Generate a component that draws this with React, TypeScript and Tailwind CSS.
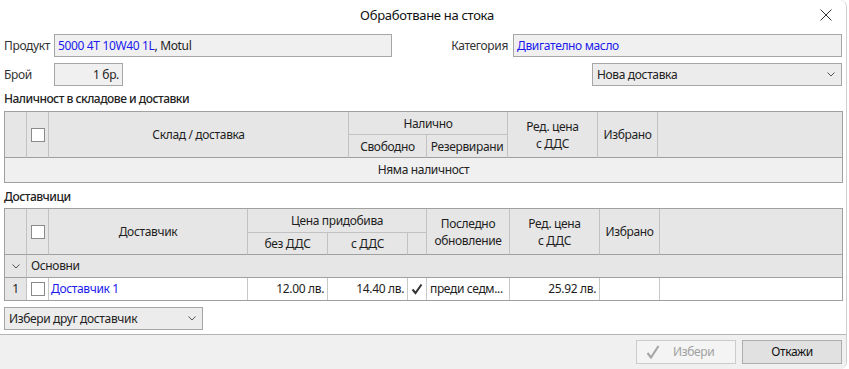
import React from "react";

const hcBase =
  "bg-[#e6e6e6] flex items-center justify-center text-center text-[#1e1e1e] leading-[17px]";

function Chevron({ className = "" }: { className?: string }) {
  return (
    <svg width="8" height="5" viewBox="0 0 8 5" className={className}>
      <polyline points="0.5,0.5 4,4 7.5,0.5" fill="none" stroke="#555" strokeWidth="1" />
    </svg>
  );
}

function Box() {
  return <div className="w-[14px] h-[14px] border border-[#8a8a8a] bg-white" />;
}

export default function App() {
  return (
    <div className="w-[849px] h-[369px] bg-white overflow-hidden font-['Noto_Sans',sans-serif] text-[12px] tracking-[-0.35px] text-[#1e1e1e]">
      <div className="w-[847px] h-full flex flex-col border-r border-[#cfcfcf] rounded-r-[7px] overflow-hidden">
        {/* title bar */}
        <div className="h-[34px] flex items-start pt-[5px] pl-[22px]">
          <div className="flex-1" />
          <div className="text-[13px] leading-[20px] tracking-[-0.3px] text-[#111]">Обработване на стока</div>
          <div className="flex-1 flex justify-end pr-[14px] pt-[4px]">
            <svg width="12" height="12" viewBox="0 0 12 12">
              <line x1="0.5" y1="0.5" x2="11.5" y2="11.5" stroke="#333" strokeWidth="1" />
              <line x1="11.5" y1="0.5" x2="0.5" y2="11.5" stroke="#333" strokeWidth="1" />
            </svg>
          </div>
        </div>

        {/* content */}
        <div className="flex-1 px-[4px] flex flex-col">
          {/* row 1 */}
          <div className="h-[23px] flex items-center">
            <div className="w-[50px] text-[#333]">Продукт</div>
            <div className="w-[338px] h-[23px] border border-[#a6a6a6] bg-[#f0f0f0] px-[3px] flex items-center">
              <span className="text-[#1a1aee]">5000 4T 10W40 1L</span>
              <span>, Motul</span>
            </div>
            <div className="flex-1 flex items-center justify-end">
              <div className="text-[#333] mr-[5px]">Категория</div>
              <div className="w-[329px] h-[23px] border border-[#a6a6a6] bg-[#f0f0f0] px-[3px] flex items-center">
                <span className="text-[#1a1aee]">Двигателно масло</span>
              </div>
            </div>
          </div>

          {/* row 2 */}
          <div className="h-[23px] mt-[6px] flex items-center">
            <div className="w-[50px] text-[#333]">Брой</div>
            <div className="w-[69px] h-[23px] border border-[#a6a6a6] bg-[#f0f0f0] px-[3px] flex items-center justify-end">
              1 бр.
            </div>
            <div className="flex-1" />
            <div className="w-[250px] h-[23px] border border-[#a6a6a6] bg-[#ececec] pl-[4px] pr-[6px] flex items-center justify-between">
              <span className="text-[#222]">Нова доставка</span>
              <Chevron />
            </div>
          </div>

          {/* section label */}
          <div className="h-[25px] flex items-center font-medium tracking-[-0.5px] text-[#222]">
            Наличност в складове и доставки
          </div>

          {/* table 1 */}
          <div className="w-[839px] border border-[#a0a0a0] grid grid-cols-[22px_22px_300px_78px_81px_90px_60px_1fr] grid-rows-[23px_23px_24px]">
            <div className={`${hcBase} row-span-2 border-r border-b border-r-[#c2c2c2] border-b-[#a0a0a0]`} />
            <div className={`${hcBase} row-span-2 border-r border-b border-r-[#c2c2c2] border-b-[#a0a0a0]`}>
              <Box />
            </div>
            <div className={`${hcBase} row-span-2 border-r border-b border-r-[#c2c2c2] border-b-[#a0a0a0]`}>
              Склад / доставка
            </div>
            <div className={`${hcBase} col-span-2 border-r border-b border-[#c2c2c2]`}>Налично</div>
            <div className={`${hcBase} row-span-2 border-r border-b border-r-[#c2c2c2] border-b-[#a0a0a0]`}>
              Ред. цена
              <br />с ДДС
            </div>
            <div className={`${hcBase} row-span-2 border-r border-b border-r-[#c2c2c2] border-b-[#a0a0a0]`}>
              Избрано
            </div>
            <div className={`${hcBase} row-span-2 border-b border-b-[#a0a0a0]`} />
            <div className={`${hcBase} border-r border-b border-r-[#c2c2c2] border-b-[#a0a0a0]`}>Свободно</div>
            <div className={`${hcBase} border-r border-b border-r-[#c2c2c2] border-b-[#a0a0a0]`}>Резервирани</div>
            <div className="col-span-8 bg-[#f0f0f0] flex items-center justify-center text-[#222]">
              Няма наличност
            </div>
          </div>

          {/* section label 2 */}
          <div className="h-[25px] flex items-center pt-[2px] font-medium tracking-[-0.5px] text-[#222]">Доставчици</div>

          {/* table 2 */}
          <div className="w-[839px] border border-[#a0a0a0] grid grid-cols-[22px_22px_199px_80px_80px_19px_83px_90px_60px_1fr] grid-rows-[24px_22px_23px_22px]">
            <div className={`${hcBase} row-span-2 border-r border-b border-r-[#c2c2c2] border-b-[#a0a0a0]`} />
            <div className={`${hcBase} row-span-2 border-r border-b border-r-[#c2c2c2] border-b-[#a0a0a0]`}>
              <Box />
            </div>
            <div className={`${hcBase} row-span-2 border-r border-b border-r-[#c2c2c2] border-b-[#a0a0a0]`}>
              Доставчик
            </div>
            <div className={`${hcBase} col-span-3 border-r border-b border-[#c2c2c2]`}>Цена придобива</div>
            <div className={`${hcBase} row-span-2 border-r border-b border-r-[#c2c2c2] border-b-[#a0a0a0]`}>
              Последно
              <br />
              обновление
            </div>
            <div className={`${hcBase} row-span-2 border-r border-b border-r-[#c2c2c2] border-b-[#a0a0a0]`}>
              Ред. цена
              <br />с ДДС
            </div>
            <div className={`${hcBase} row-span-2 border-r border-b border-r-[#c2c2c2] border-b-[#a0a0a0]`}>
              Избрано
            </div>
            <div className={`${hcBase} row-span-2 border-b border-b-[#a0a0a0]`} />
            <div className={`${hcBase} border-r border-b border-r-[#c2c2c2] border-b-[#a0a0a0]`}>без ДДС</div>
            <div className={`${hcBase} border-r border-b border-r-[#c2c2c2] border-b-[#a0a0a0]`}>с ДДС</div>
            <div className={`${hcBase} border-r border-b border-r-[#c2c2c2] border-b-[#a0a0a0]`} />

            {/* group row */}
            <div className="bg-[#e6e6e6] border-r border-b border-r-[#c2c2c2] border-b-[#a0a0a0] flex items-center justify-center">
              <Chevron />
            </div>
            <div className="col-span-9 bg-[#e6e6e6] border-b border-b-[#a0a0a0] flex items-center pl-[4px] text-[#222]">
              Основни
            </div>

            {/* data row */}
            <div className="bg-[#e6e6e6] border-r border-[#c2c2c2] flex items-center justify-center">1</div>
            <div className="bg-white border-r border-[#c8c8c8] flex items-center justify-center">
              <Box />
            </div>
            <div className="bg-white border-r border-[#c8c8c8] flex items-center pl-[2px] text-[#1a1aee]">
              Доставчик 1
            </div>
            <div className="bg-white border-r border-[#c8c8c8] flex items-center justify-end pr-[3px]">12.00 лв.</div>
            <div className="bg-white border-r border-[#c8c8c8] flex items-center justify-end pr-[3px]">14.40 лв.</div>
            <div className="bg-white border-r border-[#c8c8c8] flex items-center justify-center">
              <svg width="12" height="12" viewBox="0 0 12 12">
                <path d="M1.5 6.5 L4.5 10 L10.5 1.5" fill="none" stroke="#333" strokeWidth="2" />
              </svg>
            </div>
            <div className="bg-white border-r border-[#c8c8c8] flex items-center pl-[3px] whitespace-nowrap overflow-hidden">
              преди седм...
            </div>
            <div className="bg-white border-r border-[#c8c8c8] flex items-center justify-end pr-[3px]">25.92 лв.</div>
            <div className="bg-white border-r border-[#c8c8c8]" />
            <div className="bg-white" />
          </div>

          {/* other supplier dropdown */}
          <div className="mt-[6px] w-[199px] h-[23px] border border-[#a6a6a6] bg-[#ececec] pl-[4px] pr-[6px] flex items-center justify-between">
            <span className="text-[#222]">Избери друг доставчик</span>
            <Chevron />
          </div>
        </div>

        {/* footer */}
        <div className="h-[35px] border-t border-[#b4b4b4] bg-[#f0f0f0] flex items-center justify-end pr-[4px] gap-[6px]">
          <div className="w-[100px] h-[24px] border border-[#cccccc] bg-[#f4f4f4] flex items-center pl-[9px] gap-[13px] text-[#a0a0a0]">
            <svg width="14" height="14" viewBox="0 0 14 14">
              <path d="M1.5 8 L5 12.5 L12.5 1" fill="none" stroke="#a8a8a8" strokeWidth="2.2" />
            </svg>
            <span>Избери</span>
          </div>
          <div className="w-[100px] h-[24px] border border-[#adadad] bg-[#e1e1e1] flex items-center justify-center text-[#111]">
            Откажи
          </div>
        </div>
      </div>
    </div>
  );
}
